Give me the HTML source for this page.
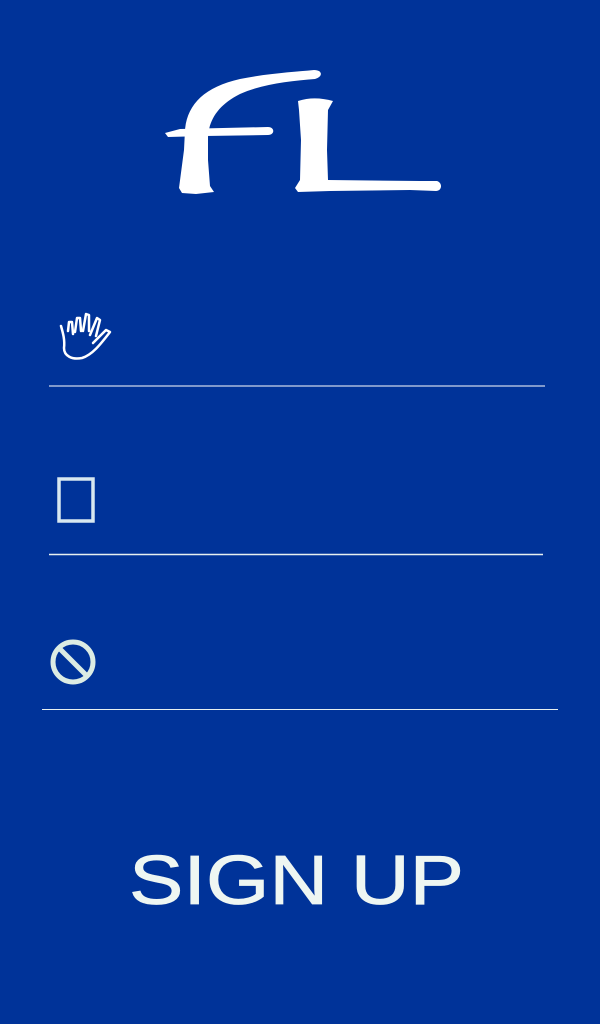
<!DOCTYPE html>
<html><head><meta charset="utf-8"><style>
html,body{margin:0;padding:0;background:#003399;width:600px;height:1024px;overflow:hidden}
svg{display:block}
</style></head><body>
<svg width="600" height="1024" viewBox="0 0 600 1024" xmlns="http://www.w3.org/2000/svg">
<rect width="600" height="1024" fill="#003399"/>
<g fill="#fff">
<path d="M182 193 L179 188 L184 150 L185 130 C187 105 204 87 240 79 C270 73 295 72 314 70 C323 70 323 77 315 79 C290 81 262 84 240 94 C218 105 209 120 208 137 L208 160 L210 186 L214 192 L196 194 Z"/>
<path d="M165 133 L180 129 L268 127 C275 127 275 135 268 135 L205 136 L168 137 Z"/>
<path d="M298 101 C310 97 322 98 333 101 L328 110 L327 150 L328 180 L420 181 L437 181 C443 183 442 191 436 191 L410 190 L330 191 L298 192 L295 188 L300 180 L301 140 L299 110 Z"/>
</g>
<g fill="none" stroke="#fff" stroke-width="2.5" stroke-linecap="round" stroke-linejoin="round">
<path d="M61 326 C63 333 65 340 64 348 C64 356 72 360 82 358 C92 355 100 345 110 332 L106 330 L93 343"/>
<path d="M68 331 L69 322 L72 322 L73 334"/>
<path d="M75 332 L77 318 L80 318 L81 331"/>
<path d="M83 331 L86 314 L89 315 L89 331"/>
<path d="M90 335 L97 318 L100 320 L96 336"/>
</g>
<line x1="49" y1="386" x2="545" y2="386" stroke="#fff" stroke-width="1"/>
<rect x="59" y="479" width="34" height="42" fill="none" stroke="#d8e8f0" stroke-width="3.5"/>
<line x1="49" y1="554.5" x2="543" y2="554.5" stroke="#e8f0f0" stroke-width="1.5"/>
<circle cx="73" cy="662" r="20" fill="none" stroke="#dcece4" stroke-width="5"/>
<line x1="59" y1="648" x2="87" y2="676" stroke="#dcece4" stroke-width="5"/>
<line x1="42" y1="709.5" x2="558" y2="709.5" stroke="#e8f0f0" stroke-width="1"/>
<text x="129" y="904" textLength="335" lengthAdjust="spacingAndGlyphs" font-family="Liberation Sans, sans-serif" font-size="70" fill="#eef6f2" stroke="#eef6f2" stroke-width="0.8">SIGN UP</text>
</svg>
</body></html>
